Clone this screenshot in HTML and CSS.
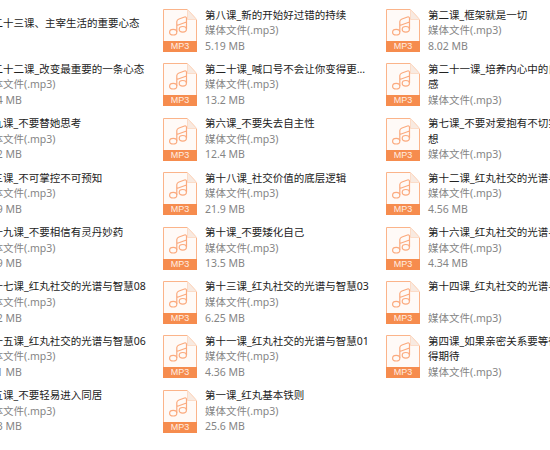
FILE: index.html
```html
<!DOCTYPE html>
<html lang="zh-CN">
<head>
    <meta charset="UTF-8">
    <title>红丸课程</title>
    <link rel="stylesheet" href="styles.css">
</head>
<body>
    <svg class="defs" width="0" height="0">
        <symbol id="page" viewBox="0 0 34 32">
            <path d="M.5 32V.5H24.5L33.5 10.5V32" fill="#fffaf7" stroke="#fbb48a"/>
            <path d="M24.5 .5V10.5H33.5Z" fill="#f8eae1" stroke="#fcdcc8"/>
            <g fill="none" stroke="#fbaa7e" stroke-width="1.2">
                <ellipse cx="10.2" cy="23.2" rx="3.6" ry="2.8"/>
                <ellipse cx="19.8" cy="20.3" rx="3.6" ry="2.8"/>
                <path d="M13.8 23V12.5Q14 10.8 16 10L21.5 8Q23.5 7.5 23.5 9.5V20M13.8 16.5L23.5 13"/>
            </g>
        </symbol>
    </svg>

    <div class="files">
        <div class="file">
            <div class="icon"><svg class="page"><use href="#page"/></svg><span class="band">MP3</span></div>
            <div class="info title-only"><div class="name">第二十三课、主宰生活的重要心态</div></div>
        </div>
        <div class="file">
            <div class="icon"><svg class="page"><use href="#page"/></svg><span class="band">MP3</span></div>
            <div class="info"><div class="name">第二十二课_改变最重要的一条心态</div><div class="meta">媒体文件(.mp3)</div><div class="meta">5.14 MB</div></div>
        </div>
        <div class="file">
            <div class="icon"><svg class="page"><use href="#page"/></svg><span class="band">MP3</span></div>
            <div class="info"><div class="name">第九课_不要替她思考</div><div class="meta">媒体文件(.mp3)</div><div class="meta">6.32 MB</div></div>
        </div>
        <div class="file">
            <div class="icon"><svg class="page"><use href="#page"/></svg><span class="band">MP3</span></div>
            <div class="info"><div class="name">第三课_不可掌控不可预知</div><div class="meta">媒体文件(.mp3)</div><div class="meta">8.79 MB</div></div>
        </div>
        <div class="file">
            <div class="icon"><svg class="page"><use href="#page"/></svg><span class="band">MP3</span></div>
            <div class="info"><div class="name">第十九课_不要相信有灵丹妙药</div><div class="meta">媒体文件(.mp3)</div><div class="meta">7.19 MB</div></div>
        </div>
        <div class="file">
            <div class="icon"><svg class="page"><use href="#page"/></svg><span class="band">MP3</span></div>
            <div class="info"><div class="name">第十七课_红丸社交的光谱与智慧08</div><div class="meta">媒体文件(.mp3)</div><div class="meta">4.52 MB</div></div>
        </div>
        <div class="file">
            <div class="icon"><svg class="page"><use href="#page"/></svg><span class="band">MP3</span></div>
            <div class="info"><div class="name">第十五课_红丸社交的光谱与智慧06</div><div class="meta">媒体文件(.mp3)</div><div class="meta">4.41 MB</div></div>
        </div>
        <div class="file">
            <div class="icon"><svg class="page"><use href="#page"/></svg><span class="band">MP3</span></div>
            <div class="info"><div class="name">第五课_不要轻易进入同居</div><div class="meta">媒体文件(.mp3)</div><div class="meta">9.03 MB</div></div>
        </div>

        <div class="file">
            <div class="icon"><svg class="page"><use href="#page"/></svg><span class="band">MP3</span></div>
            <div class="info"><div class="name">第八课_新的开始好过错的持续</div><div class="meta">媒体文件(.mp3)</div><div class="meta">5.19 MB</div></div>
        </div>
        <div class="file">
            <div class="icon"><svg class="page"><use href="#page"/></svg><span class="band">MP3</span></div>
            <div class="info"><div class="name">第二十课_喊口号不会让你变得更...</div><div class="meta">媒体文件(.mp3)</div><div class="meta">13.2 MB</div></div>
        </div>
        <div class="file">
            <div class="icon"><svg class="page"><use href="#page"/></svg><span class="band">MP3</span></div>
            <div class="info"><div class="name">第六课_不要失去自主性</div><div class="meta">媒体文件(.mp3)</div><div class="meta">12.4 MB</div></div>
        </div>
        <div class="file">
            <div class="icon"><svg class="page"><use href="#page"/></svg><span class="band">MP3</span></div>
            <div class="info"><div class="name">第十八课_社交价值的底层逻辑</div><div class="meta">媒体文件(.mp3)</div><div class="meta">21.9 MB</div></div>
        </div>
        <div class="file">
            <div class="icon"><svg class="page"><use href="#page"/></svg><span class="band">MP3</span></div>
            <div class="info"><div class="name">第十课_不要矮化自己</div><div class="meta">媒体文件(.mp3)</div><div class="meta">13.5 MB</div></div>
        </div>
        <div class="file">
            <div class="icon"><svg class="page"><use href="#page"/></svg><span class="band">MP3</span></div>
            <div class="info"><div class="name">第十三课_红丸社交的光谱与智慧03</div><div class="meta">媒体文件(.mp3)</div><div class="meta">6.25 MB</div></div>
        </div>
        <div class="file">
            <div class="icon"><svg class="page"><use href="#page"/></svg><span class="band">MP3</span></div>
            <div class="info"><div class="name">第十一课_红丸社交的光谱与智慧01</div><div class="meta">媒体文件(.mp3)</div><div class="meta">4.36 MB</div></div>
        </div>
        <div class="file">
            <div class="icon"><svg class="page"><use href="#page"/></svg><span class="band">MP3</span></div>
            <div class="info"><div class="name">第一课_红丸基本铁则</div><div class="meta">媒体文件(.mp3)</div><div class="meta">25.6 MB</div></div>
        </div>

        <div class="file">
            <div class="icon"><svg class="page"><use href="#page"/></svg><span class="band">MP3</span></div>
            <div class="info"><div class="name">第二课_框架就是一切</div><div class="meta">媒体文件(.mp3)</div><div class="meta">8.02 MB</div></div>
        </div>
        <div class="file">
            <div class="icon"><svg class="page"><use href="#page"/></svg><span class="band">MP3</span></div>
            <div class="info"><div class="name">第二十一课_培养内心中的自豪<br>感</div><div class="meta">媒体文件(.mp3)</div></div>
        </div>
        <div class="file">
            <div class="icon"><svg class="page"><use href="#page"/></svg><span class="band">MP3</span></div>
            <div class="info"><div class="name">第七课_不要对爱抱有不切实际的幻<br>想</div><div class="meta">媒体文件(.mp3)</div></div>
        </div>
        <div class="file">
            <div class="icon"><svg class="page"><use href="#page"/></svg><span class="band">MP3</span></div>
            <div class="info"><div class="name">第十二课_红丸社交的光谱与智慧</div><div class="meta">媒体文件(.mp3)</div><div class="meta">4.56 MB</div></div>
        </div>
        <div class="file">
            <div class="icon"><svg class="page"><use href="#page"/></svg><span class="band">MP3</span></div>
            <div class="info"><div class="name">第十六课_红丸社交的光谱与智慧</div><div class="meta">媒体文件(.mp3)</div><div class="meta">4.34 MB</div></div>
        </div>
        <div class="file">
            <div class="icon"><svg class="page"><use href="#page"/></svg><span class="band">MP3</span></div>
            <div class="info"><div class="name">第十四课_红丸社交的光谱与智慧<br>&nbsp;</div><div class="meta">媒体文件(.mp3)</div></div>
        </div>
        <div class="file">
            <div class="icon"><svg class="page"><use href="#page"/></svg><span class="band">MP3</span></div>
            <div class="info"><div class="name">第四课_如果亲密关系要等待什么<br>得期待</div><div class="meta">媒体文件(.mp3)</div></div>
        </div>
    </div>
</body>
</html>
```

FILE: styles.css
```css
html, body {
    margin: 0;
    height: 100%;
    overflow: hidden;
    background-color: #fff;
}

.defs {
    display: block;
}

/* the list is scrolled sideways, first column starts off screen */
.files {
    display: grid;
    grid-auto-flow: column;
    grid-template-rows: repeat(8, 54.4px);
    grid-auto-columns: 223px;
    margin-left: -60px;
    padding-top: 9px;
    font-family: "Noto Sans", "Noto Sans CJK SC", sans-serif;
    font-size: 10.5px;
    line-height: 15.6px;
}

.file {
    display: flex;
    gap: 8px;
    white-space: nowrap;
}

.icon {
    display: flex;
    flex-direction: column;
    flex: none;
    width: 34px;
    height: 43px;
}

.page {
    display: block;
    width: 34px;
    height: 32px;
}

.band {
    height: 11px;
    background-color: #f68c4e;
    color: #ffeee3;
    font-family: "Liberation Sans", sans-serif;
    font-size: 9px;
    line-height: 11px;
    text-align: center;
}

.info {
    margin-top: -1.5px;
}

.title-only {
    padding-top: 8px;
}

.name {
    color: #222;
}

.meta {
    color: #858585;
}
```
